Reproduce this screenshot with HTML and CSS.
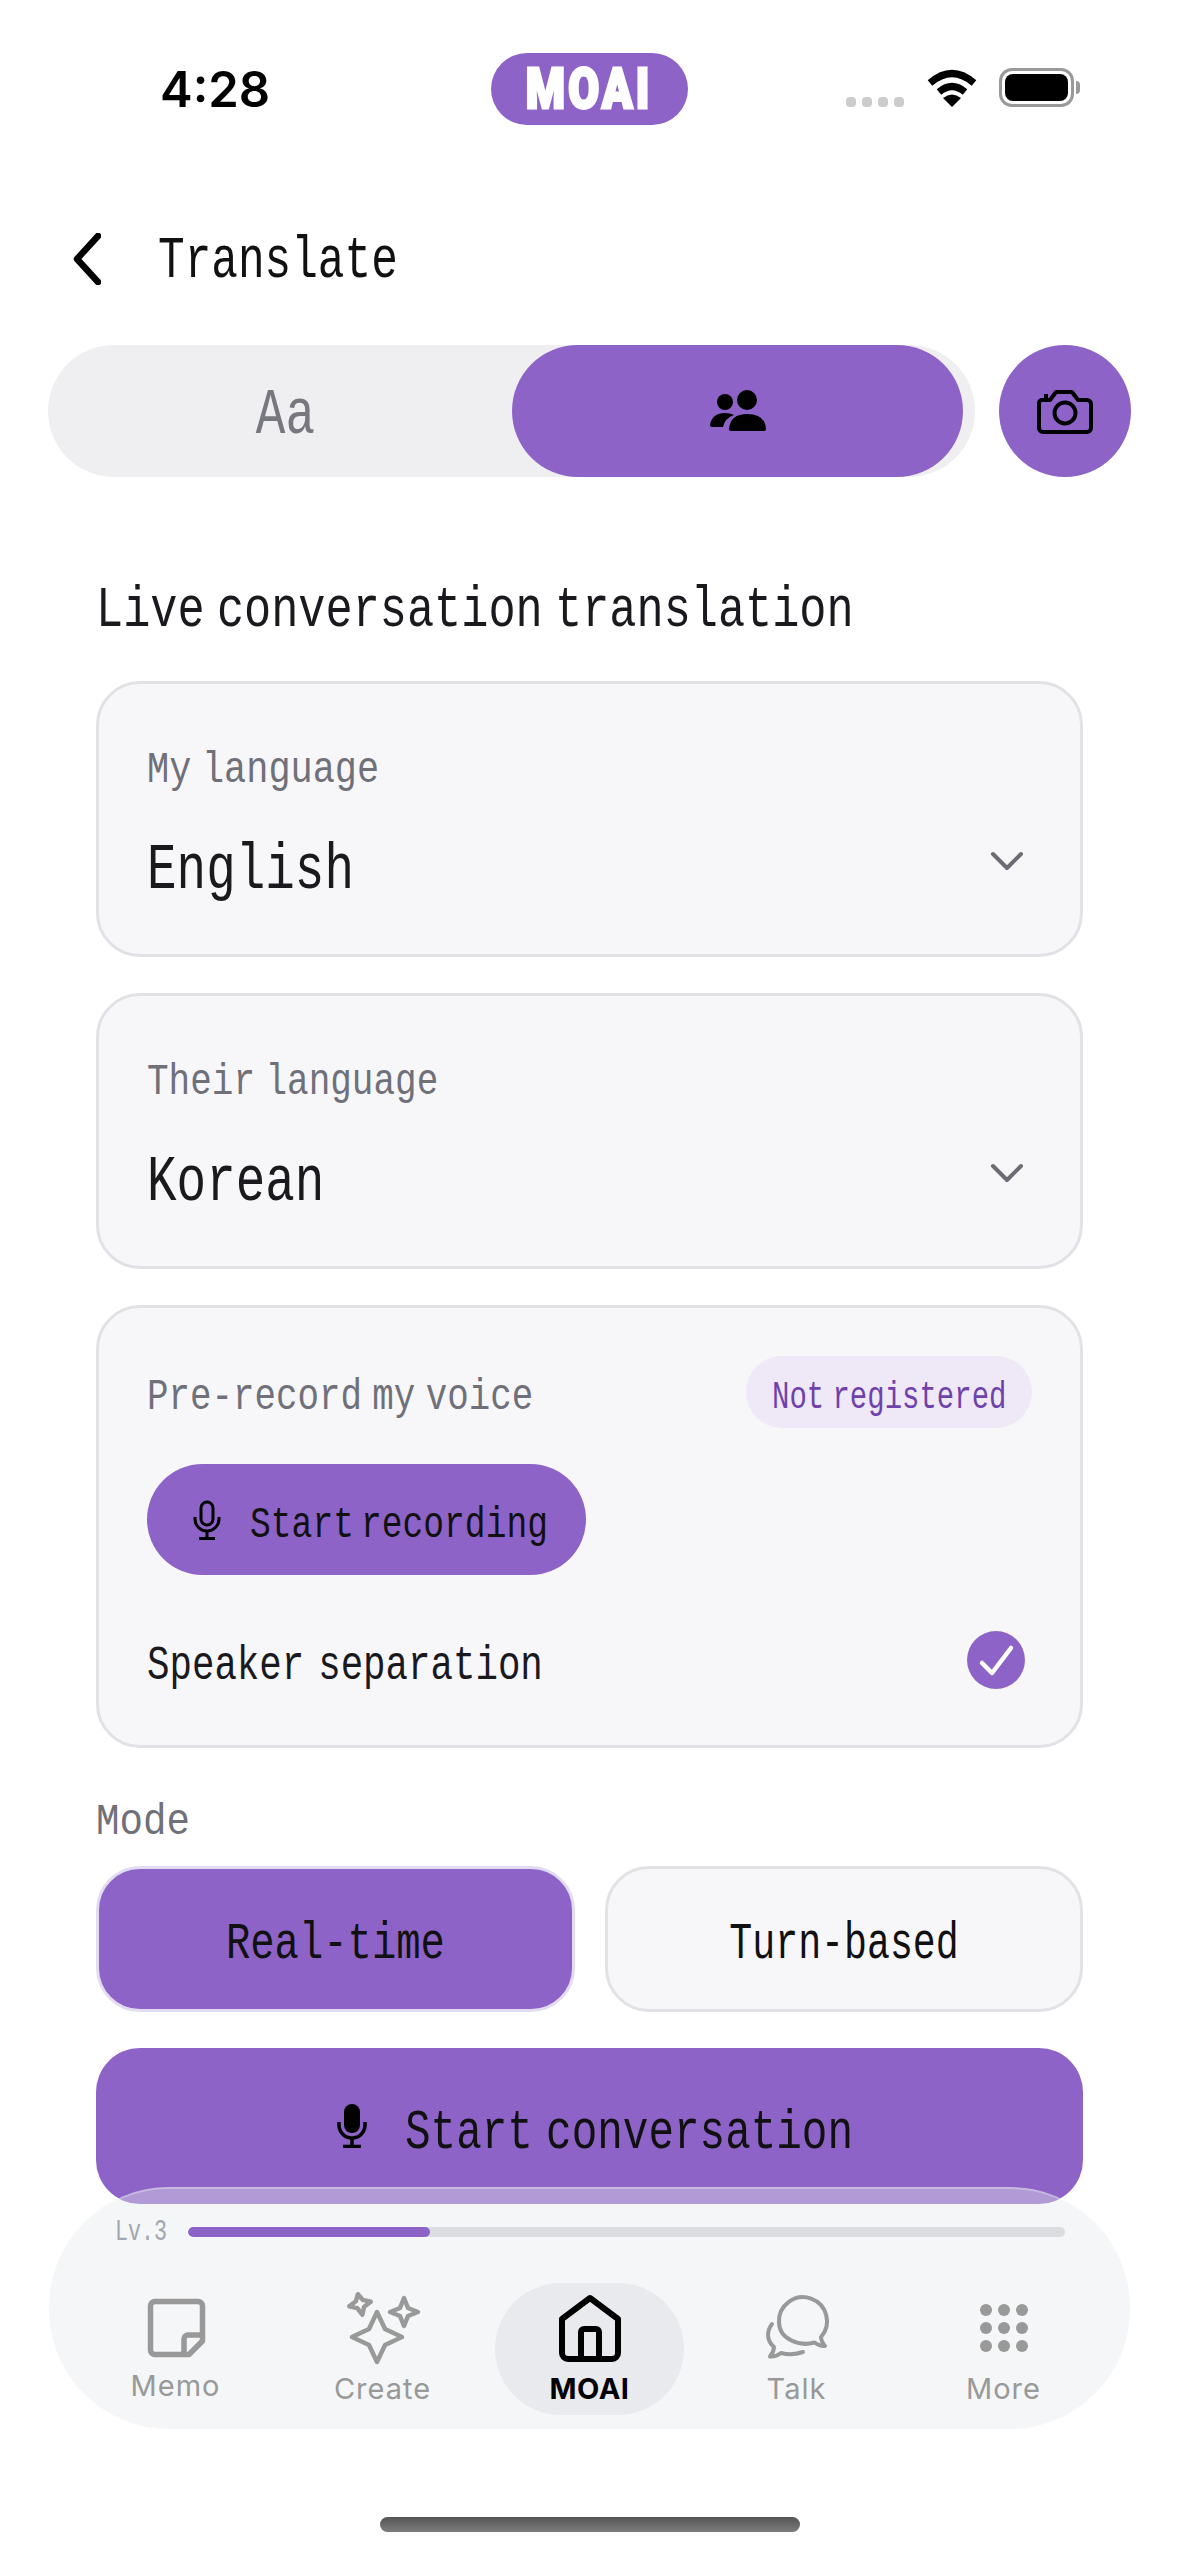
FILE: index.html
```html
<!DOCTYPE html>
<html lang="en">
<head>
    <meta charset="UTF-8">
    <meta name="viewport" content="width=device-width, initial-scale=1.0">
    <title>Translate</title>
    <link rel="stylesheet" href="styles.css">
</head>
<body>
    <div class="status">
        <div class="time">4:28</div>
        <div class="logo"><span>MOAI</span></div>
        <div class="status-right">
            <div class="dots"><i></i><i></i><i></i><i></i></div>
            <svg class="wifi" width="52" height="38" viewBox="0 0 52 38">
                <path d="M4 14 Q26 -5 48 14" fill="none" stroke="#000" stroke-width="7"/>
                <path d="M13 23 Q26 12 39 23" fill="none" stroke="#000" stroke-width="7"/>
                <path d="M26 38 L17 29 Q26 22 35 29 Z" fill="#000"/>
            </svg>
            <div class="battery"><div class="battery-fill"></div></div>
            <div class="battery-tip"></div>
        </div>
    </div>

    <div class="topbar">
        <svg width="28" height="52" viewBox="0 0 28 52"><path d="M25 3 L4 26 L25 49" fill="none" stroke="#000" stroke-width="6.500" stroke-linecap="round" stroke-linejoin="round"/></svg>
        <span class="t title">Translate</span>
    </div>

    <div class="modes">
        <div class="seg">
            <div class="seg-item"><span class="t aa">Aa</span></div>
            <div class="seg-item seg-active">
                <svg width="58" height="44" viewBox="0 0 58 44">
                    <circle cx="38" cy="11" r="10"/>
                    <circle cx="16" cy="13" r="8"/>
                    <path d="M20 40 Q21 25 38.500 25 Q56 25 57 40 Q57 42 55 42 H22 Q20 42 20 40 Z"/>
                    <path d="M1 36 Q3 24 16 24 Q21 24 25 26 Q16 29 14 38 H3 Q1 38 1 36 Z"/>
                </svg>
            </div>
        </div>
        <div class="camera">
            <svg width="58" height="46" viewBox="0 0 58 46" fill="none" stroke="#000" stroke-width="4" stroke-linejoin="round">
                <path d="M6 12 H14 L20 4 H36 L42 12 H51 a4 4 0 0 1 4 4 V40 a4 4 0 0 1 -4 4 H7 a4 4 0 0 1 -4 -4 V15 a3 3 0 0 1 3 -3 Z"/>
                <circle cx="29" cy="25" r="10.500"/>
                <path d="M8 8 H12"/>
            </svg>
        </div>
    </div>

    <div class="main">
        <h1 class="heading"><span class="t heading-text">Live conversation translation</span></h1>

        <div class="card lang">
            <div class="label"><span class="t label-text my-label">My language</span></div>
            <div class="lang-row">
                <span class="t value">English</span>
                <svg width="34" height="20" viewBox="0 0 34 20"><path d="M3 3 L17 17 L31 3" fill="none" stroke="#6c6c74" stroke-width="4" stroke-linecap="round" stroke-linejoin="round"/></svg>
            </div>
        </div>

        <div class="card lang">
            <div class="label"><span class="t label-text">Their language</span></div>
            <div class="lang-row">
                <span class="t value">Korean</span>
                <svg width="34" height="20" viewBox="0 0 34 20"><path d="M3 3 L17 17 L31 3" fill="none" stroke="#6c6c74" stroke-width="4" stroke-linecap="round" stroke-linejoin="round"/></svg>
            </div>
        </div>

        <div class="card voice">
            <div class="voice-top">
                <span class="t label-text voice-label">Pre-record my voice</span>
                <div class="badge"><span class="t badge-text">Not registered</span></div>
            </div>
            <div class="record">
                <svg width="30" height="40" viewBox="0 0 30 40" fill="none" stroke="#000" stroke-width="3">
                    <rect x="9" y="2" width="12" height="23" rx="6"/>
                    <path d="M3 17 V19 a12 12 0 0 0 24 0 V17"/>
                    <path d="M15 31 V38"/>
                    <path d="M7 38.500 H23"/>
                </svg>
                <span class="t record-text">Start recording</span>
            </div>
            <div class="speaker">
                <span class="t speaker-text">Speaker separation</span>
                <div class="check">
                    <svg width="58" height="58" viewBox="0 0 58 58"><path d="M15 32 L25 42 L44 17" fill="none" stroke="#fff" stroke-width="4.500" stroke-linecap="round" stroke-linejoin="round"/></svg>
                </div>
            </div>
        </div>

        <div class="mode-label"><span class="t mode-label-text">Mode</span></div>
        <div class="mode-row">
            <div class="mode-btn mode-active"><span class="t mode-text">Real-time</span></div>
            <div class="mode-btn"><span class="t mode-text turn-text">Turn-based</span></div>
        </div>

        <div class="start">
            <svg width="30" height="44" viewBox="0 0 30 44" fill="none" stroke="#000" stroke-width="3.500">
                <rect x="7" y="0" width="16" height="29" rx="8" fill="#000" stroke="none"/>
                <path d="M2 18 V21 a13 13 0 0 0 26 0 V18"/>
                <path d="M15 35 V42"/>
                <path d="M6 42.500 H24"/>
            </svg>
            <span class="t start-text">Start conversation</span>
        </div>
    </div>

    <div class="nav">
        <div class="level">
            <span class="t level-text">Lv.3</span>
            <div class="bar"><div class="bar-fill" style="width: 27.6%"></div></div>
        </div>
        <div class="tabs">
            <div class="tab">
                <svg width="72" height="72" viewBox="0 0 72 72" fill="none" stroke="#999" stroke-width="5.500" stroke-linejoin="round">
                    <path d="M15 10.500 H58 a4.500 4.500 0 0 1 4.500 4.500 V50 L49 63.500 H15 a4.500 4.500 0 0 1 -4.500 -4.500 V15 a4.500 4.500 0 0 1 4.500 -4.500 Z"/>
                    <path d="M62 44 H48 a4 4 0 0 0 -4 4 V63"/>
                </svg>
                <span class="tab-label tab-label-memo">Memo</span>
            </div>
            <div class="tab">
                <svg width="72" height="72" viewBox="0 0 72 72" fill="none" stroke="#999" stroke-width="4.500" stroke-linejoin="round">
                    <path d="M30 21 L38 38 L55 46 L38 54 L30 71 L22 54 L5 46 L22 38 Z"/>
                    <path d="M13 3 L16.500 9.500 L24 13 L16.500 16.500 L13 24 L9.500 16.500 L2 13 L9.500 9.500 Z" transform="rotate(-12 13 13)"/>
                    <path d="M57 7 L61 17 L71 21 L61 25 L57 35 L53 25 L43 21 L53 17 Z"/>
                </svg>
                <span class="tab-label">Create</span>
            </div>
            <div class="tab tab-active">
                <svg width="74" height="72" viewBox="0 0 74 72" fill="none" stroke="#000" stroke-width="6" stroke-linejoin="round">
                    <path d="M37 7 L65 28 V62 a6 6 0 0 1 -6 6 H15 a6 6 0 0 1 -6 -6 V28 Z"/>
                    <path d="M28 68 V41 a3 3 0 0 1 3 -3 H43 a3 3 0 0 1 3 3 V68"/>
                </svg>
                <span class="tab-label">MOAI</span>
            </div>
            <div class="tab">
                <svg width="72" height="72" viewBox="0 0 72 72" fill="none" stroke="#999" stroke-width="4" stroke-linecap="round" stroke-linejoin="round">
                    <path d="M53.500 51.500 C38 56 18 48 18 31 A24 24 0 1 1 60 46 Q60 50 64 55 Q59 55.500 53.500 51.500 Z"/>
                    <path d="M11 33 C5 41 6 50 13 56 Q12.500 62 9 65.500 Q15 66 20 62 Q31 65 42 61"/>
                </svg>
                <span class="tab-label">Talk</span>
            </div>
            <div class="tab">
                <svg width="72" height="72" viewBox="0 0 72 72" fill="#999">
                    <circle cx="18" cy="19" r="6"/><circle cx="36" cy="19" r="6"/><circle cx="54" cy="19" r="6"/>
                    <circle cx="18" cy="37" r="6"/><circle cx="36" cy="37" r="6"/><circle cx="54" cy="37" r="6"/>
                    <circle cx="18" cy="55" r="6"/><circle cx="36" cy="55" r="6"/><circle cx="54" cy="55" r="6"/>
                </svg>
                <span class="tab-label">More</span>
            </div>
        </div>
    </div>

    <div class="home-indicator"></div>
</body>
</html>
```
FILE: styles.css
```css
body {
    margin: 0;
    width: 1179px;
    height: 2556px;
    position: relative;
    overflow: hidden;
    background: #fff;
    color: #1a1a1e;
    font-family: "Liberation Mono", monospace;
}

/* the app font is a tall narrow mono, so squeeze the closest one we have */
.t {
    display: inline-block;
    white-space: nowrap;
    transform-origin: left center;
}

.status {
    display: grid;
    grid-template-columns: 1fr 197px 1fr;
    align-items: center;
    height: 72px;
    padding-top: 53px;
}
.time {
    padding-left: 160px;
    font-family: Inter, sans-serif;
    font-weight: 600;
    font-size: 49px;
    color: #000;
}
.logo {
    display: flex;
    align-items: center;
    justify-content: center;
    height: 72px;
    border-radius: 36px;
    background: #8d63c8;
}
.logo span {
    font-family: Roboto, sans-serif;
    font-weight: 900;
    font-size: 56px;
    line-height: 60px;
    letter-spacing: 4px;
    color: #fff;
    -webkit-text-stroke: 3px #fff;
    transform: scaleX(.8);
}
.status-right {
    display: flex;
    align-items: flex-end;
    padding: 0 0 4px 158px;
}
.dots {
    display: flex;
    gap: 6px;
    margin-right: 22px;
}
.dots i {
    width: 10px;
    height: 10px;
    border-radius: 4px;
    background: #ccc;
}
.wifi {
    margin-right: 21px;
}
.battery {
    box-sizing: border-box;
    width: 75px;
    height: 39px;
    padding: 3px;
    border: 3px solid #999;
    border-radius: 13px;
}
.battery-fill {
    height: 100%;
    border-radius: 8px;
    background: #000;
}
.battery-tip {
    width: 4px;
    height: 13px;
    margin: 0 0 13px 2px;
    border-radius: 0 4px 4px 0;
    background: #999;
}

.topbar {
    display: flex;
    align-items: center;
    height: 58px;
    margin-top: 105px;
    padding-left: 73px;
}
.title {
    margin-left: 57px;
    font-size: 60px;
    line-height: 58px;
    color: #111;
    transform: translateY(2px) scaleX(.74);
}

.modes {
    display: flex;
    gap: 24px;
    margin: 57px 0 0 48px;
}
.seg {
    display: flex;
    width: 927px;
    height: 132px;
    border-radius: 66px;
    background: #efeff1;
}
.seg-item {
    display: flex;
    align-items: center;
    justify-content: center;
}
.seg-item:first-child {
    width: 464px;
}
.seg-active {
    width: 451px;
    border-radius: 66px;
    background: #8d63c8;
}
.aa {
    margin-left: 10px;
    font-size: 64px;
    line-height: 80px;
    color: #77777f;
    transform: translateY(5px) scaleX(.77);
    transform-origin: center;
}
.camera {
    display: flex;
    align-items: center;
    justify-content: center;
    width: 132px;
    height: 132px;
    border-radius: 50%;
    background: #8d63c8;
}

.main {
    padding: 0 96px;
}
.heading {
    height: 70px;
    margin: 96px 0 38px;
    font-weight: 400;
    font-size: 58px;
    line-height: 70px;
}
.heading-text {
    word-spacing: -19px;
    transform: translateY(3px) scaleX(.78);
}

.card {
    box-sizing: border-box;
    border: 3px solid #e2e2e6;
    border-radius: 44px;
    background: #f7f7f9;
}
.lang {
    height: 276px;
    margin-bottom: 36px;
    padding: 60px 56px 0 48px;
}
.label {
    height: 50px;
}
.label-text {
    font-size: 45px;
    line-height: 50px;
    word-spacing: -14px;
    color: #70707a;
    transform: translateY(2px) scaleX(.8);
}
.my-label {
    transform: translateY(2px) scaleX(.82);
}
.voice-label {
    transform: translateY(6px) scaleX(.796);
}
.lang-row {
    display: flex;
    align-items: center;
    justify-content: space-between;
    height: 70px;
    margin-top: 32px;
}
.value {
    font-size: 64px;
    line-height: 70px;
    transform: translateY(10px) scaleX(.77);
}

.voice {
    height: 443px;
    padding: 48px 48px 0;
}
.voice-top {
    display: flex;
    align-items: center;
    justify-content: space-between;
}
.badge {
    display: flex;
    align-items: center;
    box-sizing: border-box;
    width: 286px;
    height: 72px;
    padding-left: 26px;
    overflow: hidden;
    border-radius: 36px;
    background: #efe9f7;
}
.badge-text {
    font-size: 38px;
    line-height: 50px;
    word-spacing: -12px;
    color: #6f42ab;
    transform: translateY(6px) scaleX(.763);
}
.record {
    display: flex;
    align-items: center;
    gap: 28px;
    box-sizing: border-box;
    width: 439px;
    height: 111px;
    margin-top: 36px;
    padding-left: 45px;
    border-radius: 56px;
    background: #8d63c8;
}
.record svg,
.start svg {
    flex-shrink: 0;
}
.record-text {
    font-size: 45px;
    line-height: 60px;
    word-spacing: -18px;
    color: #111;
    transform: translateY(6px) scaleX(.77);
}
.speaker {
    display: flex;
    align-items: center;
    justify-content: space-between;
    margin-top: 56px;
    padding-right: 7px;
}
.speaker-text {
    font-size: 48px;
    line-height: 58px;
    word-spacing: -11px;
    transform: translateY(6px) scaleX(.78);
}
.check {
    width: 58px;
    height: 58px;
    border-radius: 50%;
    background: #8d63c8;
}

.mode-label {
    height: 50px;
    margin-top: 48px;
}
.mode-label-text {
    font-size: 45px;
    line-height: 50px;
    color: #70707a;
    transform: translateY(2px) scaleX(.87);
}
.mode-row {
    display: grid;
    grid-template-columns: 1fr 1fr;
    gap: 30px;
    margin-top: 20px;
}
.mode-btn {
    display: flex;
    align-items: center;
    justify-content: center;
    box-sizing: border-box;
    height: 146px;
    border: 3px solid #e2e2e6;
    border-radius: 44px;
    background: #f7f7f9;
}
.mode-active {
    border-color: #e2dcf0;
    background: #8d63c8;
}
.mode-text {
    font-size: 52px;
    line-height: 60px;
    color: #111;
    transform: translateY(6px) scaleX(.78);
    transform-origin: center;
}
.turn-text {
    transform: translateY(6px) scaleX(.735);
}

.start {
    display: flex;
    align-items: center;
    gap: 38px;
    box-sizing: border-box;
    height: 156px;
    margin-top: 36px;
    padding-left: 241px;
    border-radius: 44px;
    background: #8d63c8;
}
.start-text {
    font-size: 55px;
    line-height: 60px;
    word-spacing: -16px;
    color: #111;
    transform: translateY(8px) scaleX(.775);
}

/* floating bar, sits on top of the page */
.nav {
    position: absolute;
    left: 49px;
    top: 2187px;
    box-sizing: border-box;
    width: 1081px;
    height: 242px;
    border-top: 2px solid rgba(255, 255, 255, .3);
    border-radius: 120px;
    background: rgba(228, 233, 236, .41);
}
.level {
    display: flex;
    align-items: center;
    height: 30px;
    padding: 28px 65px 0 66px;
}
.level-text {
    width: 73px;
    font-size: 30px;
    line-height: 30px;
    color: #a1a6b0;
    transform: scaleX(.72);
}
.bar {
    flex: 1;
    height: 10px;
    overflow: hidden;
    border-radius: 5px;
    background: #dcdde1;
}
.bar-fill {
    height: 100%;
    border-radius: 5px;
    background: #8d63c8;
}
.tabs {
    display: grid;
    grid-template-columns: repeat(5, 207px);
    margin-top: 36px;
    padding-left: 23px;
}
.tab {
    display: flex;
    flex-direction: column;
    align-items: center;
    box-sizing: border-box;
    height: 132px;
    margin: 0 9px;
    padding-top: 8px;
    border-radius: 66px;
}
.tab svg {
    overflow: visible;
}
.tab-active {
    background: #e9eaee;
}
.tab-label {
    margin-top: 8px;
    font-family: Inter, sans-serif;
    font-weight: 400;
    font-size: 29px;
    line-height: 36px;
    letter-spacing: 1px;
    color: #999;
}
.tab-label-memo {
    margin-top: 5px;
}
.tab-active .tab-label {
    font-weight: 700;
    letter-spacing: .5px;
    color: #000;
}

.home-indicator {
    position: absolute;
    left: 380px;
    top: 2517px;
    width: 420px;
    height: 15px;
    border-radius: 8px;
    background: linear-gradient(#555, #7c7c7c);
}
```
